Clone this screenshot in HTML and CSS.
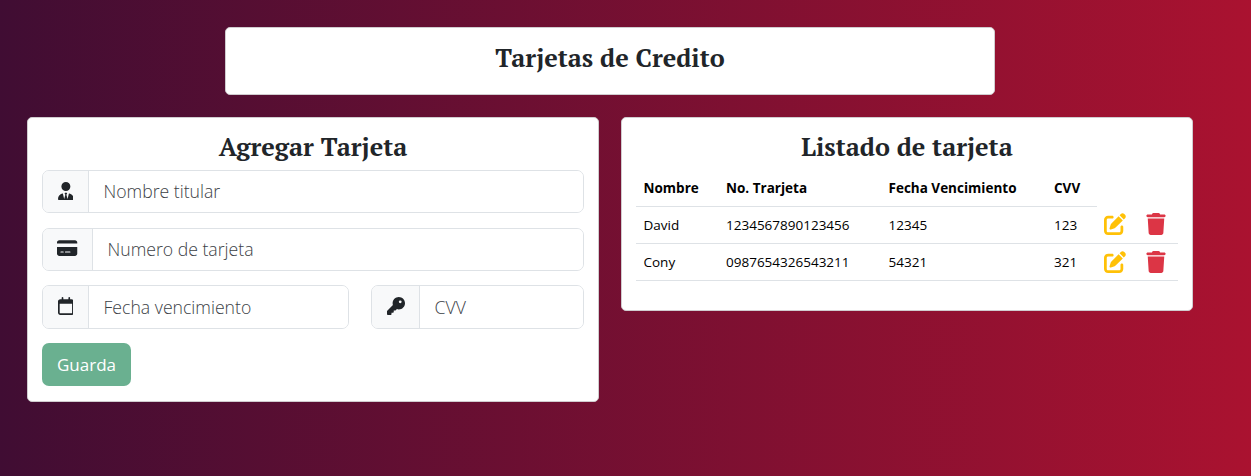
FILE: index.html
```html
<!DOCTYPE html>
<html lang="es">
<head>
<meta charset="utf-8">
<title>Tarjetas de Credito</title>
<link rel="stylesheet" href="styles.css">
</head>
<body>
<svg class="sprite" aria-hidden="true">
  <symbol id="edit" viewBox="0 0 512 512"><path d="M471.6 21.7c-21.9-21.9-57.3-21.9-79.2 0L362.3 51.7l97.9 97.9 30.1-30.1c21.9-21.9 21.9-57.3 0-79.2L471.6 21.7zm-299.2 220c-6.1 6.1-10.8 13.6-13.5 21.9l-29.6 88.8c-2.9 8.6-.6 18.1 5.8 24.6s15.9 8.7 24.6 5.8l88.8-29.6c8.2-2.7 15.7-7.4 21.9-13.5L437.7 172.3 339.7 74.3 172.4 241.7zM96 64C43 64 0 107 0 160V416c0 53 43 96 96 96H352c53 0 96-43 96-96V320c0-17.7-14.3-32-32-32s-32 14.3-32 32v96c0 17.7-14.3 32-32 32H96c-17.7 0-32-14.3-32-32V160c0-17.7 14.3-32 32-32h96c17.7 0 32-14.3 32-32s-14.3-32-32-32H96z"/></symbol>
  <symbol id="trash" viewBox="0 0 448 512"><path d="M135.2 17.7L128 32H32C14.3 32 0 46.3 0 64S14.3 96 32 96H416c17.7 0 32-14.3 32-32s-14.3-32-32-32H320l-7.2-14.3C307.4 6.8 296.3 0 284.2 0H163.8c-12.1 0-23.2 6.8-28.6 17.7zM416 128H32L53.2 467c1.6 25.3 22.6 45 47.9 45H346.9c25.3 0 46.3-19.7 47.9-45L416 128z"/></symbol>
</svg>
<main class="page">
  <header class="card banner"><h1 class="title">Tarjetas de Credito</h1></header>
  <div class="columns">
    <section class="card form-card">
      <h2 class="title">Agregar Tarjeta</h2>
      <form class="form">
        <div class="group">
          <span class="addon"><svg class="icon" viewBox="0 0 448 512"><path d="M96 128a128 128 0 1 0 256 0A128 128 0 1 0 96 128zm94.5 200.2l18.6 31L175.8 483.1l-36-146.9c-2-8.1-9.8-13.4-17.9-11.3C51.9 342.4 0 405.8 0 481.3c0 17 13.8 30.7 30.7 30.7H417.3c17 0 30.7-13.8 30.7-30.7c0-75.5-51.9-138.9-121.9-156.4c-8.1-2-15.9 3.3-17.9 11.3l-36 146.9L238.9 359.2l18.6-31c6.4-10.7-1.3-24.2-13.7-24.2H204.3c-12.4 0-20.1 13.6-13.7 24.2z"/></svg></span>
          <input class="input" placeholder="Nombre titular">
        </div>
        <div class="group">
          <span class="addon addon-card"><svg class="icon" viewBox="0 0 576 512"><path d="M64 32C28.7 32 0 60.7 0 96v32H576V96c0-35.3-28.7-64-64-64H64zM576 224H0V416c0 35.3 28.7 64 64 64H512c35.3 0 64-28.7 64-64V224zM112 352h64c8.8 0 16 7.2 16 16s-7.2 16-16 16H112c-8.8 0-16-7.2-16-16s7.2-16 16-16zm112 16c0-8.8 7.2-16 16-16H368c8.8 0 16 7.2 16 16s-7.2 16-16 16H240c-8.8 0-16-7.2-16-16z"/></svg></span>
          <input class="input" placeholder="Numero de tarjeta">
        </div>
        <div class="pair">
          <div class="group">
            <span class="addon"><svg class="icon" viewBox="0 0 448 512"><path d="M152 24c0-13.3-10.7-24-24-24s-24 10.7-24 24V64H64C28.7 64 0 92.7 0 128v16 48V448c0 35.3 28.7 64 64 64H384c35.3 0 64-28.7 64-64V192 144 128c0-35.3-28.7-64-64-64H344V24c0-13.3-10.7-24-24-24s-24 10.7-24 24V64H152V24zM48 192H400V448c0 8.8-7.2 16-16 16H64c-8.8 0-16-7.2-16-16V192z"/></svg></span>
            <input class="input" placeholder="Fecha vencimiento">
          </div>
          <div class="group">
            <span class="addon addon-key"><svg class="icon" viewBox="0 0 512 512"><path d="M336 352c97.2 0 176-78.8 176-176S433.2 0 336 0S160 78.8 160 176c0 18.7 2.9 36.8 8.3 53.7L7 391c-4.5 4.5-7 10.6-7 17v80c0 13.3 10.7 24 24 24h80c13.3 0 24-10.7 24-24V448h40c13.3 0 24-10.7 24-24V384h40c6.4 0 12.5-2.5 17-7l33.3-33.3c16.9 5.4 35 8.3 53.7 8.3zM376 96a40 40 0 1 1 0 80 40 40 0 1 1 0-80z"/></svg></span>
            <input class="input" placeholder="CVV">
          </div>
        </div>
        <button class="save" type="button" disabled>Guarda</button>
      </form>
    </section>
    <section class="card list-card">
      <h2 class="title">Listado de tarjeta</h2>
      <table class="table">
        <thead>
          <tr><th class="c-name">Nombre</th><th class="c-number">No. Trarjeta</th><th class="c-date">Fecha Vencimiento</th><th class="c-cvv">CVV</th><td class="c-edit blank"></td><td class="blank"></td></tr>
        </thead>
        <tbody>
          <tr><td>David</td><td>1234567890123456</td><td>12345</td><td>123</td><td class="action"><svg class="edit"><use href="#edit"/></svg></td><td class="action"><svg class="trash"><use href="#trash"/></svg></td></tr>
          <tr class="second"><td>Cony</td><td>0987654326543211</td><td>54321</td><td>321</td><td class="action"><svg class="edit"><use href="#edit"/></svg></td><td class="action"><svg class="trash"><use href="#trash"/></svg></td></tr>
        </tbody>
      </table>
    </section>
  </div>
</main>
</body>
</html>
```
FILE: styles.css
```css
* { box-sizing: border-box; }
html { height: 100%; }
body {
  margin: 0;
  min-height: 100%;
  overflow: hidden;
  font-family: "Open Sans", "Noto Sans", sans-serif;
  color: #212529;
  background: linear-gradient(90deg, #400d33 0%, #aa1230 100%);
}
.sprite { display: none; }
.page { padding: 27px 58px 0 27px; }
.card {
  background: #fff;
  border: 1px solid #d0cccf;
  border-radius: 5px;
}
.banner { width: 770px; height: 68px; margin: 0 0 22px 198px; padding-top: 13px; }
.title {
  margin: 0;
  font: 700 25.2px/34px "PT Serif", "Liberation Serif", serif;
  text-align: center;
}
.columns { display: grid; grid-template-columns: 572px 572px; gap: 22px; align-items: start; }
.form-card { height: 285px; padding: 12px 14px; }
.form { display: flex; flex-direction: column; align-items: stretch; gap: 14.5px; padding-top: 6px; }
.group { display: flex; height: 43.3px; border: 1px solid #dee2e6; border-radius: 7px; overflow: hidden; }
.addon {
  width: 46px;
  flex: none;
  display: flex;
  align-items: center;
  justify-content: center;
  padding-bottom: 2px;
  background: #f8f9fa;
  border-right: 1px solid #dee2e6;
}
.addon-card { width: 50px; }
.addon-key { width: 48px; }
.icon { height: 18px; fill: #212529; }
.input {
  flex: 1;
  min-width: 0;
  border: 0;
  padding: 0 14.5px;
  background: #fff;
  font: 300 17.65px/27px "Open Sans", "Noto Sans", sans-serif;
}
.input::placeholder { color: #3c4146; opacity: 1; }
.pair { display: grid; grid-template-columns: 307px 213px; gap: 22px; margin: -0.6px 0; }
.pair .group { height: 44px; }
.save {
  align-self: flex-start;
  width: 89px;
  height: 43px;
  padding: 0;
  border: 0;
  border-radius: 7px;
  background: #6ab090;
  color: #fff;
  font: 400 17px/27px "Open Sans", "Noto Sans", sans-serif;
}
.list-card { height: 194px; padding: 12px 14px; }
.table {
  width: 542px;
  margin-top: 6px;
  table-layout: fixed;
  border-collapse: separate;
  border-spacing: 0;
  font-size: 13.5px;
  line-height: 20px;
  color: #000;
}
.table th, .table td {
  height: 37px;
  padding: 0 0 0 7.5px;
  border-bottom: 1px solid #dee2e6;
  text-align: left;
  white-space: nowrap;
}
.table th { font-weight: 700; }
.table .blank { border-bottom: 0; }
.c-name { width: 82.5px; }
.c-number { width: 162.5px; }
.c-date { width: 165.5px; }
.c-cvv { width: 50.5px; }
.c-edit { width: 41px; }
.edit, .trash { display: block; height: 22px; margin-top: -3px; }
.edit { width: 22px; fill: #ffc107; margin-left: -0.8px; }
.trash { width: 20px; fill: #dc3545; }
.second .edit, .second .trash { margin-top: -1px; }
```
